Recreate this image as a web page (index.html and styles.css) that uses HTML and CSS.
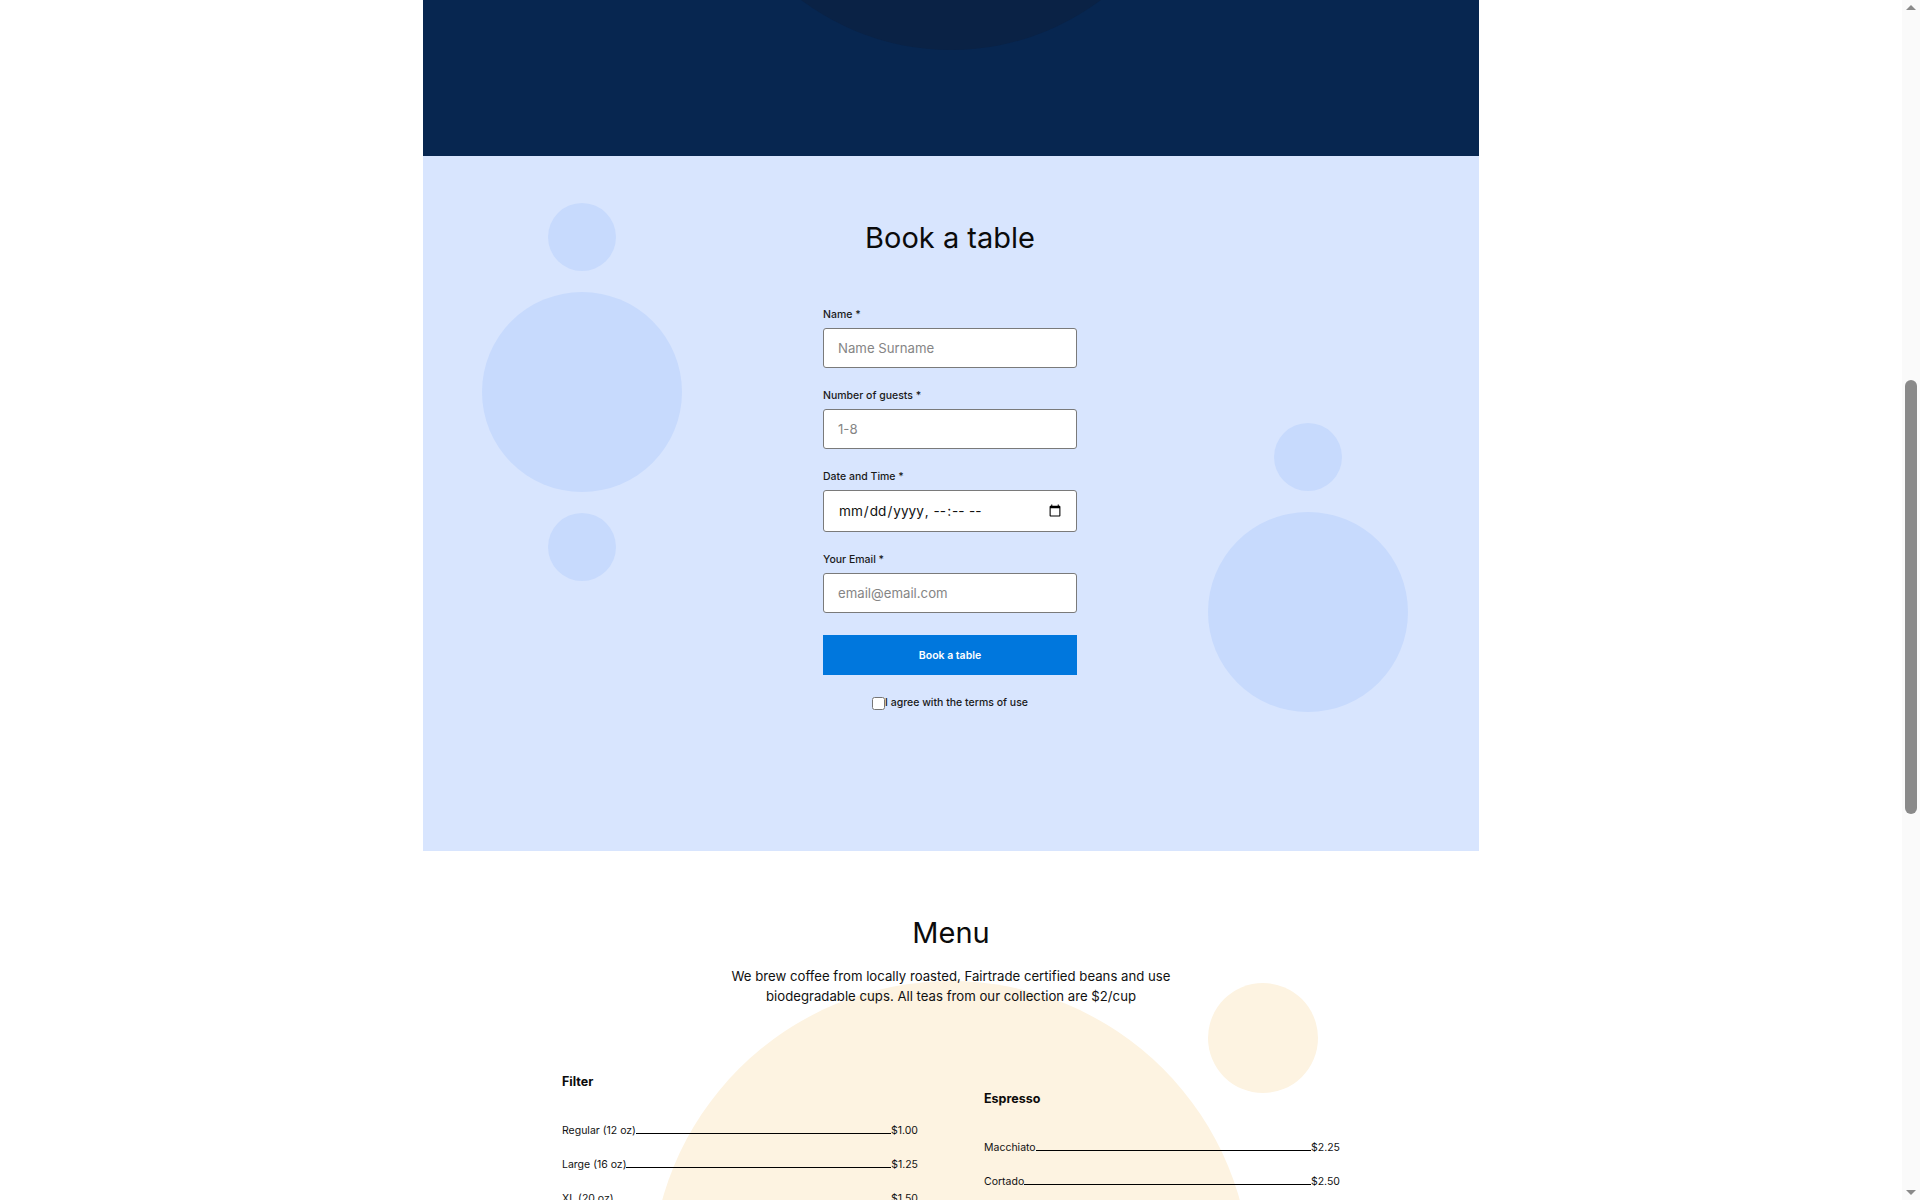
FILE: index.html
```html
<!DOCTYPE html>
<html lang="en">
<head>
<meta charset="utf-8">
<title>Cafe</title>
<link rel="stylesheet" href="styles.css">
</head>
<body>
<main class="page">
  <section class="hero">
    <div class="hero-circle"></div>
  </section>

  <section class="booking">
    <div class="booking-grid">
      <div class="deco deco-left">
        <span class="dot dot-sm"></span>
        <span class="dot dot-lg"></span>
        <span class="dot dot-sm"></span>
      </div>
      <h2 class="booking-title">Book a table</h2>
      <form class="booking-form">
        <div class="field">
          <label class="field-label" for="name">Name *</label>
          <input class="field-input" id="name" type="text" placeholder="Name Surname">
        </div>
        <div class="field">
          <label class="field-label" for="guests">Number of guests *</label>
          <input class="field-input" id="guests" type="text" placeholder="1-8">
        </div>
        <div class="field">
          <label class="field-label" for="when">Date and Time *</label>
          <input class="field-input field-date" id="when" type="datetime-local">
        </div>
        <div class="field">
          <label class="field-label" for="email">Your Email *</label>
          <input class="field-input" id="email" type="email" placeholder="email@email.com">
        </div>
        <button class="submit" type="button">Book a table</button>
        <label class="agree"><input class="agree-box" type="checkbox">I agree with the terms of use</label>
      </form>
      <div class="deco deco-right">
        <span class="dot dot-sm"></span>
        <span class="dot dot-lg"></span>
      </div>
    </div>
  </section>

  <section class="menu">
    <div class="menu-bg-big"></div>
    <div class="menu-bg-small"></div>
    <div class="menu-content">
      <h2 class="menu-title">Menu</h2>
      <p class="menu-intro">We brew coffee from locally roasted, Fairtrade certified beans and use biodegradable cups. All teas from our collection are $2/cup</p>
      <div class="menu-grid">
        <div class="menu-col">
          <h3 class="menu-cat">Filter</h3>
          <div class="menu-item"><span>Regular (12 oz)</span><span class="leader"></span><span>$1.00</span></div>
          <div class="menu-item"><span>Large (16 oz)</span><span class="leader"></span><span>$1.25</span></div>
          <div class="menu-item"><span>XL (20 oz)</span><span class="leader"></span><span>$1.50</span></div>
          <div class="menu-item"><span>Refill</span><span class="leader"></span><span>$0.50</span></div>
        </div>
        <div class="menu-col">
          <h3 class="menu-cat">Espresso</h3>
          <div class="menu-item"><span>Macchiato</span><span class="leader"></span><span>$2.25</span></div>
          <div class="menu-item"><span>Cortado</span><span class="leader"></span><span>$2.50</span></div>
          <div class="menu-item"><span>Cappuccino</span><span class="leader"></span><span>$2.75</span></div>
        </div>
      </div>
    </div>
  </section>
</main>

<div class="scrollbar" aria-hidden="true">
  <span class="sb-arrow sb-up"></span>
  <span class="sb-thumb"></span>
  <span class="sb-arrow sb-down"></span>
</div>

<script src="script.js"></script>
</body>
</html>
```

FILE: styles.css
```css
html, body {
  margin: 0;
  padding: 0;
  background: #ffffff;
}

body {
  padding-right: 18px;
  font-family: Inter, "Noto Sans", Arial, sans-serif;
  color: #111111;
}

/* classic browser scrollbar of the screenshot */
.scrollbar {
  position: fixed;
  top: 0;
  right: 0;
  width: 18px;
  height: 100vh;
  background: #fafafa;
  z-index: 10;
}

.sb-thumb {
  position: absolute;
  left: 3px;
  top: 380px;
  width: 12px;
  height: 434px;
  border-radius: 6px;
  background: #8a8a8a;
}

.sb-arrow {
  position: absolute;
  left: 4px;
  width: 0;
  height: 0;
  border-left: 5px solid transparent;
  border-right: 5px solid transparent;
}

.sb-up {
  top: 5px;
  border-bottom: 5px solid #8a8a8a;
}

.sb-down {
  bottom: 5px;
  border-top: 5px solid #8a8a8a;
}

.page {
  width: 1056px;
  margin: 0 auto;
}

/* hero (mostly above the fold) */
.hero {
  position: relative;
  height: 1165px;
  background: #072650;
  overflow: hidden;
}

.hero-circle {
  position: absolute;
  left: 278px;
  top: 559px;
  width: 500px;
  height: 500px;
  border-radius: 50%;
  background: #0a2245;
}

/* booking */
.booking {
  box-sizing: border-box;
  height: 695px;
  padding-top: 64px;
  background: #d8e5fe;
  overflow: hidden;
}

.booking-grid {
  display: grid;
  grid-template-columns: 400px 254px 1fr;
  grid-template-rows: auto 1fr;
  align-items: start;
}

.deco {
  grid-row: 1 / span 2;
  display: flex;
  flex-direction: column;
  align-items: center;
  gap: 21px;
  width: 200px;
}

.deco-left {
  grid-column: 1;
  margin-left: 59px;
  margin-top: -17px;
}

.deco-right {
  grid-column: 3;
  margin-left: 131px;
  margin-top: 203px;
}

.dot {
  display: block;
  border-radius: 50%;
  background: #c7dafd;
}

.dot-sm {
  width: 68px;
  height: 68px;
}

.dot-lg {
  width: 200px;
  height: 200px;
}

.booking-title {
  grid-column: 2;
  grid-row: 1;
  margin: 0 0 52px;
  font-size: 29px;
  line-height: 36px;
  font-weight: 400;
  text-align: center;
  color: #0b0b0b;
  white-space: nowrap;
}

.booking-form {
  grid-column: 2;
  grid-row: 2;
  display: flex;
  flex-direction: column;
  gap: 21px;
}

.field {
  display: flex;
  flex-direction: column;
}

.field-label {
  font-size: 10.5px;
  line-height: 14px;
  font-weight: 500;
  color: #1a1a1a;
  margin-bottom: 6px;
}

.field-input {
  box-sizing: border-box;
  width: 100%;
  height: 40px;
  margin: 0;
  padding: 0 14px;
  border: 1px solid #7a7a7a;
  border-radius: 3px;
  background: #ffffff;
  font-family: Inter, "Noto Sans", Arial, sans-serif;
  font-size: 13.2px;
  color: #111111;
  outline: none;
}

.field-input::placeholder {
  color: #858585;
}

.field-date {
  height: 42px;
  padding-right: 12px;
  font-size: 13.6px;
}

.submit {
  margin-top: 1px;
  height: 40px;
  border: none;
  border-radius: 0;
  background: #0077dd;
  color: #ffffff;
  font-family: Inter, "Noto Sans", Arial, sans-serif;
  font-size: 10.5px;
  font-weight: 600;
  cursor: pointer;
}

.agree {
  display: flex;
  align-items: center;
  justify-content: center;
  font-size: 10.5px;
  line-height: 14px;
  color: #1a1a1a;
  font-weight: 500;
}

.agree-box {
  width: 13px;
  height: 13px;
  margin: 0;
}

/* menu */
.menu {
  position: relative;
  min-height: 1375px;
  overflow: hidden;
}

.menu-bg-big {
  position: absolute;
  left: 228px;
  top: 130px;
  width: 600px;
  height: 600px;
  border-radius: 50%;
  background: #fdf3e1;
}

.menu-bg-small {
  position: absolute;
  left: 785px;
  top: 132px;
  width: 110px;
  height: 110px;
  border-radius: 50%;
  background: #fdf3e1;
}

.menu-content {
  position: relative;
  padding-top: 63px;
}

.menu-title {
  margin: 0;
  font-size: 29px;
  line-height: 38px;
  font-weight: 400;
  text-align: center;
  color: #0b0b0b;
}

.menu-intro {
  max-width: 460px;
  margin: 14px auto 0;
  font-size: 13.2px;
  line-height: 20px;
  text-align: center;
  color: #111111;
}

.menu-grid {
  width: 778px;
  margin: 68px auto 0;
  display: grid;
  grid-template-columns: 356px 356px;
  column-gap: 66px;
  align-items: center;
}

.menu-col {
  display: flex;
  flex-direction: column;
  gap: 20px;
}

.menu-cat {
  margin: 0 0 14px;
  font-size: 12.5px;
  line-height: 16px;
  font-weight: 700;
  color: #0b0b0b;
}

.menu-item {
  display: flex;
  align-items: baseline;
  font-size: 10.5px;
  line-height: 14px;
  color: #111111;
}

.leader {
  flex: 1;
  height: 0;
  border-bottom: 1px solid #000000;
}
```

FILE: script.js
```js
window.scrollTo(0, 1009);
```
